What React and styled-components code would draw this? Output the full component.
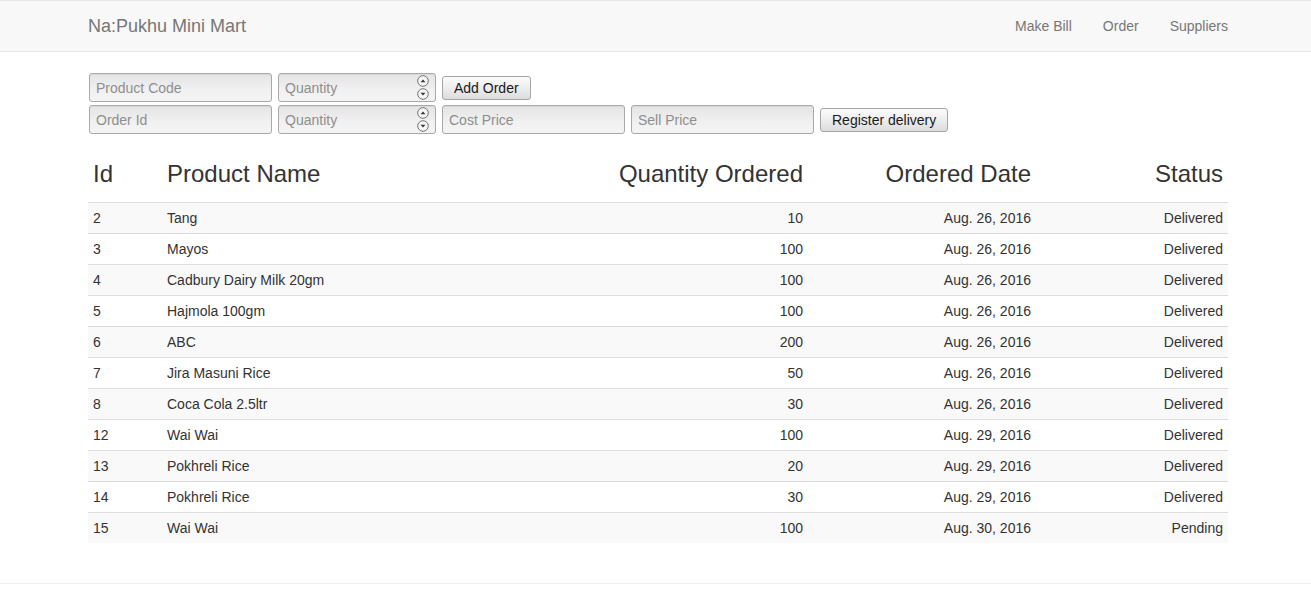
import React from "react";
import styled, { createGlobalStyle } from "styled-components";

const GlobalStyle = createGlobalStyle`
  html, body {
    margin: 0;
    padding: 0;
    background: #fff;
  }
  body {
    font-family: "Liberation Sans", Helvetica, Arial, sans-serif;
    font-size: 14px;
    line-height: 1.42857;
    color: #333;
  }
  * { box-sizing: border-box; }
`;

const orders = [
  { id: 2, name: "Tang", qty: 10, date: "Aug. 26, 2016", status: "Delivered" },
  { id: 3, name: "Mayos", qty: 100, date: "Aug. 26, 2016", status: "Delivered" },
  { id: 4, name: "Cadbury Dairy Milk 20gm", qty: 100, date: "Aug. 26, 2016", status: "Delivered" },
  { id: 5, name: "Hajmola 100gm", qty: 100, date: "Aug. 26, 2016", status: "Delivered" },
  { id: 6, name: "ABC", qty: 200, date: "Aug. 26, 2016", status: "Delivered" },
  { id: 7, name: "Jira Masuni Rice", qty: 50, date: "Aug. 26, 2016", status: "Delivered" },
  { id: 8, name: "Coca Cola 2.5ltr", qty: 30, date: "Aug. 26, 2016", status: "Delivered" },
  { id: 12, name: "Wai Wai", qty: 100, date: "Aug. 29, 2016", status: "Delivered" },
  { id: 13, name: "Pokhreli Rice", qty: 20, date: "Aug. 29, 2016", status: "Delivered" },
  { id: 14, name: "Pokhreli Rice", qty: 30, date: "Aug. 29, 2016", status: "Delivered" },
  { id: 15, name: "Wai Wai", qty: 100, date: "Aug. 30, 2016", status: "Pending" },
];

const Navbar = styled.nav`
  background: #f8f8f8;
  border-top: 1px solid #e7e7e7;
  border-bottom: 1px solid #e7e7e7;
  height: 52px;
`;

const Container = styled.div`
  width: 1140px;
  margin-left: calc(50% - 567.5px);
`;

const NavInner = styled(Container)`
  height: 50px;
  display: flex;
  align-items: center;
  justify-content: space-between;
`;

const Brand = styled.a`
  font-size: 18px;
  color: #777;
  text-decoration: none;
  line-height: 20px;
`;

const NavLinks = styled.ul`
  display: flex;
  gap: 31px;
  list-style: none;
  margin: 0;
  padding: 0;
`;

const NavLink = styled.a`
  color: #777;
  text-decoration: none;
  font-size: 14px;
  line-height: 20px;
`;

const Form = styled.form`
  margin: 21px 0 0 1px;
  display: flex;
  flex-direction: column;
  gap: 3px;
`;

const FormRow = styled.div`
  display: flex;
  align-items: center;
  gap: 6px;
`;

const fieldLook = `
  height: 29px;
  border: 1px solid #a9a9a9;
  border-radius: 3px;
  background: linear-gradient(to bottom, #e4e4e4 0%, #f1f1f1 60%, #f4f4f4 100%);
  box-shadow: inset 0 1px 1px rgba(0, 0, 0, 0.06);
`;

const TextInput = styled.input`
  ${fieldLook}
  width: ${(p) => p.$w || 183}px;
  padding: 0 6px;
  font-family: inherit;
  font-size: 14px;
  color: #333;
  outline: none;
  &::placeholder { color: #8e8e8e; }
`;

const NumberField = styled.div`
  ${fieldLook}
  width: 158px;
  display: flex;
  align-items: center;
  padding: 0 6px 0 6px;
`;

const NumberInput = styled.input`
  flex: 1;
  min-width: 0;
  border: none;
  background: transparent;
  font-family: inherit;
  font-size: 14px;
  color: #333;
  outline: none;
  padding: 0;
  &::placeholder { color: #8e8e8e; }
`;

const Spinner = styled.div`
  display: flex;
  flex-direction: column;
  gap: 1px;
`;

const Button = styled.button`
  height: 24px;
  padding: 0 11px;
  font-family: inherit;
  font-size: 14px;
  color: #1a1a1a;
  border: 1px solid #a6a6a6;
  border-radius: 3px;
  background: linear-gradient(to bottom, #fbfbfb 0%, #ececec 55%, #dcdcdc 100%);
  cursor: pointer;
`;

const Table = styled.div`
  margin-top: 18px;
  width: 1140px;
`;

const Row = styled.div`
  display: grid;
  grid-template-columns: 74px 288px 358px 228px 192px;
  background: ${(p) => (p.$striped ? "#f9f9f9" : "transparent")};
  border-top: ${(p) => (p.$head ? "none" : "1px solid #ddd")};
`;

const HeadCell = styled.div`
  font-size: 24px;
  line-height: 26px;
  padding: 9px 5px 15px;
  text-align: ${(p) => (p.$right ? "right" : "left")};
  color: #333;
`;

const Cell = styled.div`
  padding: 5px;
  line-height: 20px;
  font-size: 14px;
  text-align: ${(p) => (p.$right ? "right" : "left")};
`;

const Footer = styled.hr`
  margin: 40px 0 0;
  border: none;
  border-top: 1px solid #eee;
`;

const SpinArrow = ({ up }) => (
  <svg width="12" height="12" viewBox="0 0 12 12">
    <circle cx="6" cy="6" r="5.3" fill="#f6f6f6" stroke="#666" strokeWidth="0.9" />
    <path d={up ? "M3.6 7.2 L6 4.4 L8.4 7.2 Z" : "M3.6 4.8 L6 7.6 L8.4 4.8 Z"} fill="#333" />
  </svg>
);

const QuantityField = () => (
  <NumberField>
    <NumberInput placeholder="Quantity" />
    <Spinner>
      <SpinArrow up />
      <SpinArrow />
    </Spinner>
  </NumberField>
);

export default function App() {
  return (
    <>
      <GlobalStyle />
      <Navbar>
        <NavInner>
          <Brand href="#">Na:Pukhu Mini Mart</Brand>
          <NavLinks>
            <li><NavLink href="#">Make Bill</NavLink></li>
            <li><NavLink href="#">Order</NavLink></li>
            <li><NavLink href="#">Suppliers</NavLink></li>
          </NavLinks>
        </NavInner>
      </Navbar>
      <Container>
        <Form onSubmit={(e) => e.preventDefault()}>
          <FormRow>
            <TextInput placeholder="Product Code" />
            <QuantityField />
            <Button type="button">Add Order</Button>
          </FormRow>
          <FormRow>
            <TextInput placeholder="Order Id" />
            <QuantityField />
            <TextInput placeholder="Cost Price" />
            <TextInput placeholder="Sell Price" />
            <Button type="button">Register delivery</Button>
          </FormRow>
        </Form>
        <Table>
          <Row $head>
            <HeadCell>Id</HeadCell>
            <HeadCell>Product Name</HeadCell>
            <HeadCell $right>Quantity Ordered</HeadCell>
            <HeadCell $right>Ordered Date</HeadCell>
            <HeadCell $right>Status</HeadCell>
          </Row>
          {orders.map((o, i) => (
            <Row key={o.id} $striped={i % 2 === 0}>
              <Cell>{o.id}</Cell>
              <Cell>{o.name}</Cell>
              <Cell $right>{o.qty}</Cell>
              <Cell $right>{o.date}</Cell>
              <Cell $right>{o.status}</Cell>
            </Row>
          ))}
        </Table>
      </Container>
      <Footer />
    </>
  );
}
